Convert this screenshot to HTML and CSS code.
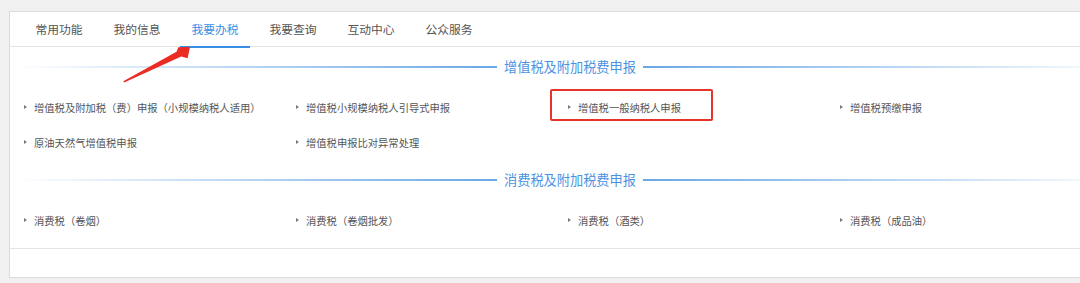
FILE: index.html
```html
<!DOCTYPE html>
<html lang="zh-CN">
<head>
<meta charset="utf-8">
<link rel="stylesheet" href="styles.css">
</head>
<body>
<div class="card">
  <div class="tabs">
    <div class="tab">常用功能</div>
    <div class="tab">我的信息</div>
    <div class="tab active">我要办税</div>
    <div class="tab">我要查询</div>
    <div class="tab">互动中心</div>
    <div class="tab">公众服务</div>
  </div>
  <div class="section-head">
    <span class="line left"></span>
    <span class="title">增值税及附加税费申报</span>
    <span class="line right"></span>
  </div>
  <div class="items">
    <div class="item">增值税及附加税（费）申报（小规模纳税人适用）</div>
    <div class="item">增值税小规模纳税人引导式申报</div>
    <div class="item marked">增值税一般纳税人申报<span class="mark"></span></div>
    <div class="item">增值税预缴申报</div>
    <div class="item">原油天然气增值税申报</div>
    <div class="item">增值税申报比对异常处理</div>
  </div>
  <div class="section-head second">
    <span class="line left"></span>
    <span class="title">消费税及附加税费申报</span>
    <span class="line right"></span>
  </div>
  <div class="items">
    <div class="item">消费税（卷烟）</div>
    <div class="item">消费税（卷烟批发）</div>
    <div class="item">消费税（酒类）</div>
    <div class="item">消费税（成品油）</div>
  </div>
  <div class="footer"></div>
</div>
<svg class="arrow" width="1080" height="283" viewBox="0 0 1080 283">
  <polygon points="123.3,81.3 176.5,51.8 178.3,47.3 190,47 187.6,58.2 181.2,56.6 124.2,82.6" fill="#ec2b22"/>
</svg>
</body>
</html>
```
FILE: styles.css
```css
html, body {
  margin: 0;
  padding: 0;
}
body {
  background: #f0f0f0;
  width: 1080px;
  height: 283px;
  overflow: hidden;
  position: relative;
  font-family: "Noto Sans CJK SC", "Noto Sans", sans-serif;
  color: #555;
  padding: 11px 0 0 9px;
  box-sizing: border-box;
}
.card {
  background: #fff;
  border: 1px solid #dcdcdc;
  width: 1122px;
  height: 267px;
  box-sizing: border-box;
}
.tabs {
  display: flex;
  gap: 8px;
  height: 35px;
  padding-left: 14px;
  border-bottom: 1px solid #e4e4e4;
  box-sizing: border-box;
}
.tab {
  width: 70px;
  text-align: center;
  font-size: 11.8px;
  line-height: 34px;
  color: #555;
  box-sizing: border-box;
}
.tab.active {
  color: #3a8ee6;
  border-bottom: 2px solid #3a8ee6;
  height: 36px;
}
.section-head {
  display: flex;
  align-items: center;
  height: 14px;
  margin: 13px 5px 0 5px;
}
.section-head.second {
  margin-top: 13.5px;
}
.line {
  flex: 1;
  height: 2px;
}
.line.left {
  background: linear-gradient(to right, rgba(106, 168, 230, 0), #6aa8e6);
}
.line.right {
  background: linear-gradient(to right, #6aa8e6, rgba(106, 168, 230, 0));
}
.title {
  font-size: 13.2px;
  color: #4a93e2;
  padding: 0 7px;
  line-height: 14px;
}
.items {
  display: grid;
  grid-template-columns: repeat(4, 272px);
  grid-auto-rows: 35px;
  padding: 15.5px 0 0 11px;
}
.item {
  font-size: 10.3px;
  line-height: 35px;
  color: #555;
  padding-left: 3px;
  white-space: nowrap;
  display: flex;
  align-items: center;
  position: relative;
}
.item::before {
  content: "";
  width: 0;
  height: 0;
  border-left: 3px solid #777;
  border-top: 2.5px solid transparent;
  border-bottom: 2.5px solid transparent;
  margin-right: 7px;
}
.mark {
  position: absolute;
  left: -15px;
  top: -0.5px;
  width: 163px;
  height: 32px;
  border: 2px solid #e8332c;
  border-radius: 2px;
  box-sizing: border-box;
}
.footer {
  margin-top: 10.5px;
  border-top: 1px solid #e4e4e4;
}
.arrow {
  position: absolute;
  left: 0;
  top: 0;
  pointer-events: none;
}
```
